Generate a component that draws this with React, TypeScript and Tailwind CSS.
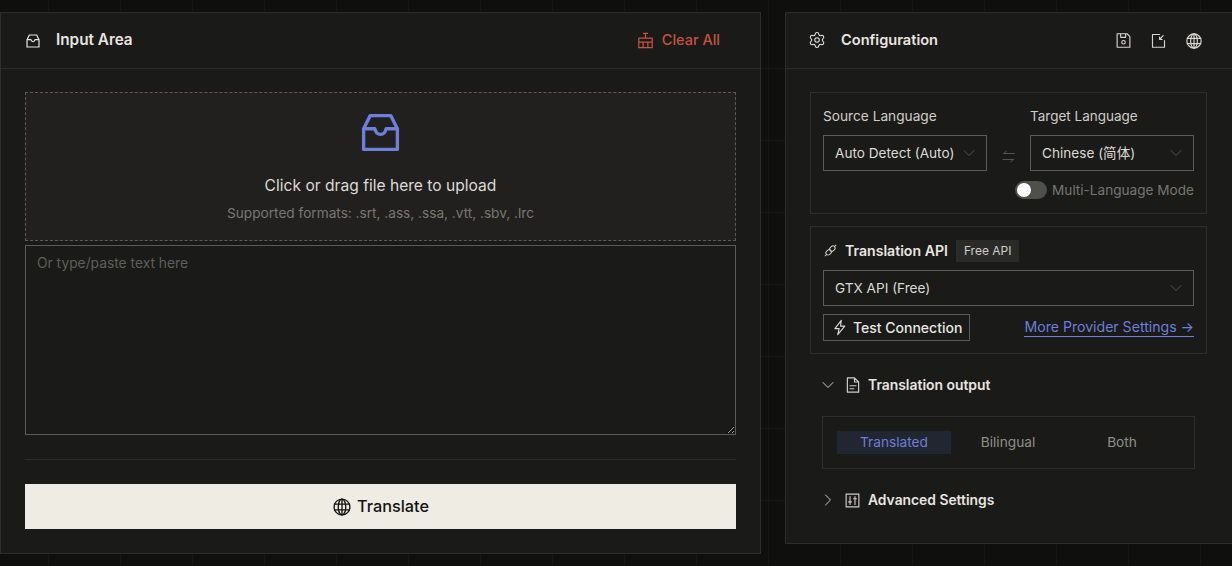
import { ChevronDown, ChevronRight, Settings } from "lucide-react";
import type { ReactNode } from "react";

const font = "[font-family:Inter,'Noto_Sans_CJK_SC',sans-serif]";

function Icon({ className, children }: { className: string; children: ReactNode }) {
  return (
    <svg
      viewBox="0 0 24 24"
      fill="none"
      stroke="currentColor"
      strokeWidth="1.6"
      strokeLinecap="round"
      strokeLinejoin="round"
      className={className}
    >
      {children}
    </svg>
  );
}

function TrayIcon({ className, strokeWidth = 2 }: { className: string; strokeWidth?: number }) {
  return (
    <svg
      viewBox="0 0 24 24"
      fill="none"
      stroke="currentColor"
      strokeWidth={strokeWidth}
      strokeLinejoin="round"
      className={className}
    >
      <path d="M3 10 6.500 3h11L21 10v11H3z" />
      <path d="M3 10h6c.4 2 1.500 3 3 3s2.600-1 3-3h6" />
    </svg>
  );
}

function GlobeIcon({ className }: { className: string }) {
  return (
    <Icon className={className}>
      <circle cx="12" cy="12" r="9.500" />
      <ellipse cx="12" cy="12" rx="4.500" ry="9.500" />
      <path d="M12 2.500v19M3 8.500h18M3 15.500h18" />
    </Icon>
  );
}

function Select({ label, width }: { label: string; width: string }) {
  return (
    <div className={`flex h-9 items-center justify-between border border-[#5a5a56] pl-[11px] pr-[7px] ${width}`}>
      <span className="whitespace-nowrap text-[13.600px] text-[#dcdad4]">{label}</span>
      <ChevronDown className="size-5 text-[#5f5f5b]" strokeWidth={1} />
    </div>
  );
}

export default function App() {
  return (
    <div
      className={`flex h-[566px] w-[1232px] items-start gap-6 overflow-hidden bg-[#0f0f0e] bg-[linear-gradient(#171716_1px,transparent_1px),linear-gradient(90deg,#171716_1px,transparent_1px)] bg-[size:72px_72px] bg-[position:48px_-4px] pt-3 ${font}`}
    >
      <section className="h-[542px] w-[761px] shrink-0 border border-[#2e2e2b] bg-[#1a1a18]">
        <header className="flex h-14 items-center justify-between border-b border-[#2e2e2b] pl-6 pr-10">
          <div className="flex items-center gap-[15px]">
            <TrayIcon className="size-4 text-[#e8e6e0]" strokeWidth={1.800} />
            <h2 className="text-[15.300px] font-semibold text-[#e8e6e0]">Input Area</h2>
          </div>
          <div className="flex items-center gap-[7px] pb-px text-[#c4533f]">
            <Icon className="size-[19px]">
              <path d="M12 3v5M9.500 3h5M3.500 9h17v12h-17zM3.500 14h17M9 15v6M15 15v6" />
            </Icon>
            <span className="text-[14.500px] font-medium">Clear All</span>
          </div>
        </header>
        <div className="px-6 pt-[23px]">
          <div className="flex h-[149px] flex-col items-center border border-dashed border-[#5a5a56] bg-[#21201f] pt-[17px]">
            <TrayIcon className="size-[45px] text-[#6d7fd8]" strokeWidth={1.800} />
            <p className="mt-[19px] text-[15.600px] leading-6 text-[#dcdad4]">Click or drag file here to upload</p>
            <p className="mt-[5px] text-[13.650px] leading-5 text-[#777772]">Supported formats: .srt, .ass, .ssa, .vtt, .sbv, .lrc</p>
          </div>
          <textarea
            readOnly
            placeholder="Or type/paste text here"
            className="mt-1 block h-[190px] w-full border border-[#5a5a56] bg-transparent px-[11px] py-[6px] text-[13.800px] leading-[22px] outline-none placeholder:text-[#5f5f5b]"
          />
          <div className="mt-6 border-t border-[#2e2e2b]" />
          <button
            type="button"
            className="mt-6 flex h-[45px] w-full items-center justify-center gap-[5px] bg-[#efece4] text-[#141412]"
          >
            <GlobeIcon className="size-5" />
            <span className="text-[16.300px] font-medium">Translate</span>
          </button>
        </div>
      </section>

      <section className="h-[532px] w-[460px] shrink-0 border border-r-0 border-[#2e2e2b] bg-[#1a1a18]">
        <header className="flex h-14 items-center justify-between border-b border-[#2e2e2b] pl-[22px] pr-[42px]">
          <div className="flex items-center gap-[15px]">
            <Settings className="size-[18px] text-[#e8e6e0]" strokeWidth={1.400} />
            <h2 className="text-[14.600px] font-semibold text-[#e8e6e0]">Configuration</h2>
          </div>
          <div className="flex items-center gap-[18px] text-[#d6d4ce]">
            <Icon className="size-[17px]">
              <path d="M3 2.500h14l4 4v15H3zM8 2.500v5h7v-5" />
              <circle cx="12" cy="14.500" r="2.500" />
            </Icon>
            <Icon className="size-[17px]">
              <path d="M20.500 12v9.500H3.500v-18h10M18.500 5l-5 5.500M13.500 7v3.500H17" />
            </Icon>
            <GlobeIcon className="size-[18px]" />
          </div>
        </header>

        <div className="pl-6 pt-[23px]">
          <div className="h-[122px] w-[397px] border border-[#2e2e2b] px-3 pt-[13px]">
            <div className="flex items-end">
              <div className="w-[164px]">
                <p className="mb-[9px] text-[13.700px] leading-[20px] text-[#cfcdc7]">Source Language</p>
                <Select label="Auto Detect (Auto)" width="w-[164px]" />
              </div>
              <div className="flex h-9 w-[43px] items-center justify-center pt-2 text-[13px] text-[#55554f]">⇋</div>
              <div className="w-[164px]">
                <p className="mb-[9px] text-[13.500px] leading-[20px] text-[#cfcdc7]">Target Language</p>
                <Select label="Chinese (简体)" width="w-[164px]" />
              </div>
            </div>
            <div className="mt-[9px] flex items-center justify-end gap-[5px]">
              <span className="flex h-[18px] w-[32px] items-center rounded-full bg-[#4f4f4b] pl-[2px]">
                <span className="size-[14px] rounded-full bg-white" />
              </span>
              <span className="text-[13.600px] text-[#767671]">Multi-Language Mode</span>
            </div>
          </div>

          <div className="mt-3 h-[128px] w-[397px] border border-[#2e2e2b] px-3 pt-3">
            <div className="flex h-[23px] items-center">
              <Icon className="size-[15px] text-[#cfcdc7]">
                <g transform="rotate(-45 12 12)">
                  <path d="M0 12h3M21 12h3" />
                  <rect x="3" y="8.500" width="9.500" height="7" rx="3.500" />
                  <rect x="11.500" y="8.500" width="9.500" height="7" rx="3.500" />
                </g>
              </Icon>
              <span className="ml-[7px] text-[14.100px] font-semibold text-[#e8e6e0]">Translation API</span>
              <span className="ml-2 flex h-[22px] items-center bg-[#2a2a28] px-2 text-[12px] text-[#cfcdc7]">Free API</span>
            </div>
            <div className="mt-2">
              <Select label="GTX API (Free)" width="w-[371px]" />
            </div>
            <div className="mt-2 flex w-[371px] items-center justify-between">
              <div className="flex h-[27px] w-[147px] items-center border border-[#5a5a56] pb-px pl-[7px]">
                <Icon className="size-[17px] text-[#dcdad4]">
                  <path d="M14.500 2 5.500 13.500h6L9.500 22l10-12h-6z" />
                </Icon>
                <span className="ml-[5px] whitespace-nowrap text-[14px] font-medium text-[#e8e6e0]">Test Connection</span>
              </div>
              <a className="mb-px border-b border-[#6d7fd8] text-[14.100px] leading-[18px] text-[#6d7fd8]">More Provider Settings →</a>
            </div>
          </div>

          <div className="mt-[19px] flex h-[24px] items-center pl-[8px]">
            <ChevronDown className="size-5 text-[#cfcdc7]" strokeWidth={1.200} />
            <Icon className="ml-[5.500px] size-[18px] text-[#cfcdc7]">
              <path d="M14 2.500H4.500v19h15V8zM14 2.500V8h5.500M8 13h8M8 17h5" />
            </Icon>
            <span className="ml-[6.500px] text-[13.900px] font-semibold text-[#e8e6e0]">Translation output</span>
          </div>

          <div className="ml-3 mt-[19px] flex h-[53px] w-[373px] items-center border border-[#2e2e2b] px-[14px]">
            <span className="flex h-[23px] w-[114px] items-center justify-center bg-[#222631] text-[13.700px] text-[#6d7fd8]">Translated</span>
            <span className="flex w-[114px] items-center justify-center text-[13.700px] text-[#8f8f8a]">Bilingual</span>
            <span className="flex w-[114px] items-center justify-center text-[13.700px] text-[#8f8f8a]">Both</span>
          </div>

          <div className="mt-[19px] flex h-[24px] items-center pl-[8px]">
            <ChevronRight className="size-5 text-[#cfcdc7]" strokeWidth={1.200} />
            <Icon className="ml-[6px] size-[17px] text-[#cfcdc7]">
              <path d="M3 3h18v18H3zM8.500 6.500v11M15.500 6.500v11M6.500 14h4M13.500 9.500h4" />
            </Icon>
            <span className="ml-[7px] text-[13.850px] font-semibold text-[#e8e6e0]">Advanced Settings</span>
          </div>
        </div>
      </section>
    </div>
  );
}
